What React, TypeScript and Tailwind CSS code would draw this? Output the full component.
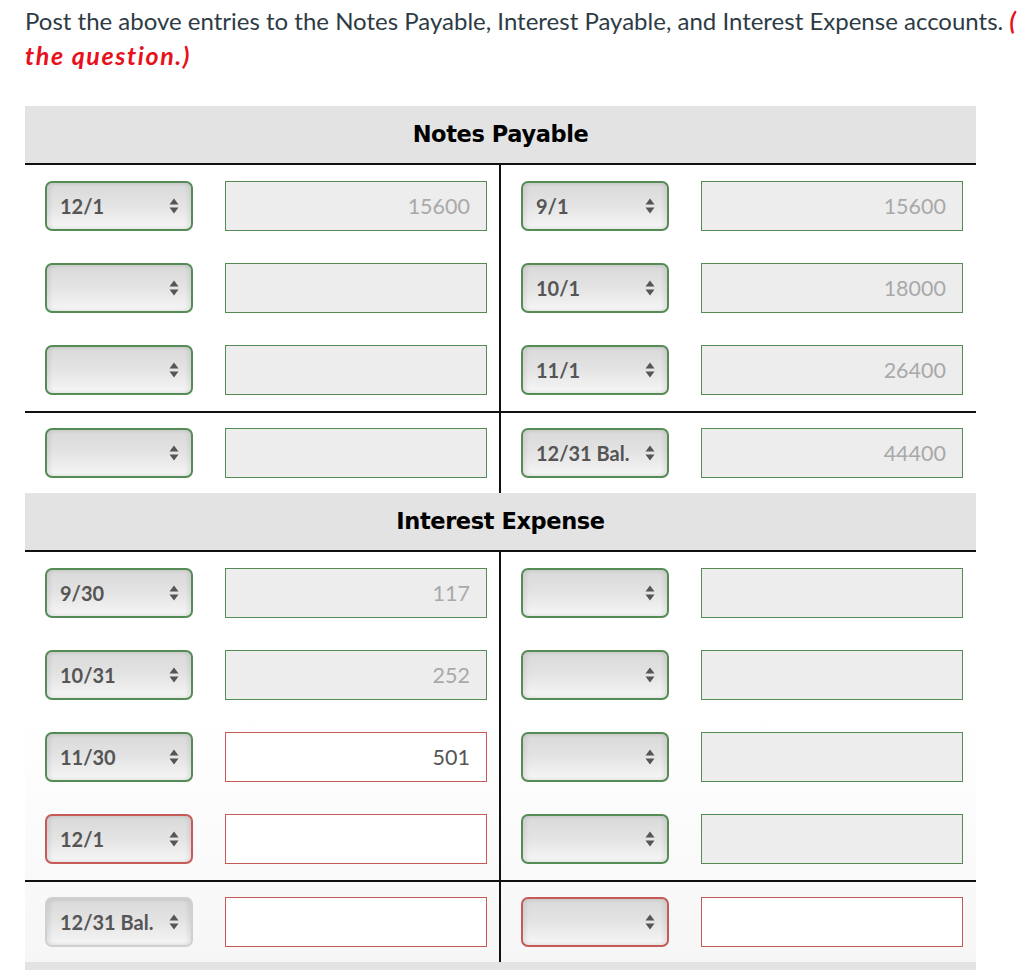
import React from 'react';

type Tone = 'green' | 'red' | 'gray';

type Cell = {
  date?: string;
  dateTone: Tone;
  amount?: string;
  amountTone: Tone;
};

type Row = {
  left: Cell;
  right: Cell;
  balance?: boolean;
};

const g = (date?: string, amount?: string): Cell => ({ date, dateTone: 'green', amount, amountTone: 'green' });

const notesPayable: Row[] = [
  { left: g('12/1', '15600'), right: g('9/1', '15600') },
  { left: g(), right: g('10/1', '18000') },
  { left: g(), right: g('11/1', '26400') },
  { left: g(), right: g('12/31 Bal.', '44400'), balance: true },
];

const interestExpense: Row[] = [
  { left: g('9/30', '117'), right: g() },
  { left: g('10/31', '252'), right: g() },
  { left: { date: '11/30', dateTone: 'green', amount: '501', amountTone: 'red' }, right: g() },
  { left: { date: '12/1', dateTone: 'red', amountTone: 'red' }, right: g() },
  {
    left: { date: '12/31 Bal.', dateTone: 'gray', amountTone: 'red' },
    right: { dateTone: 'red', amountTone: 'red' },
    balance: true,
  },
];

const selectBorder: Record<Tone, string> = {
  green: 'border-[#558c55]',
  red: 'border-[#c55a57]',
  gray: 'border-[#d0d0d0]',
};

function Arrows() {
  return (
    <svg width="10" height="16" viewBox="0 0 10 16" className="shrink-0">
      <path d="M5 0.5 L9.5 6.5 L0.5 6.5 Z" fill="#555" />
      <path d="M0.5 9.5 L9.5 9.5 L5 15.5 Z" fill="#555" />
    </svg>
  );
}

function DateSelect({ value, tone }: { value?: string; tone: Tone }) {
  return (
    <div
      className={`w-[148px] h-[50px] rounded-[7px] border-2 ${selectBorder[tone]} bg-gradient-to-b from-[#d9d9d9] via-[#e4e4e4] to-[#f6f6f6] shadow-[inset_3px_0_4px_rgba(0,0,0,0.07),inset_-3px_0_4px_rgba(0,0,0,0.07)] flex items-center justify-between pl-[13px] pr-[12px]`}
    >
      <span className="text-[20px] font-bold text-[#555] whitespace-nowrap">{value}</span>
      <Arrows />
    </div>
  );
}

function AmountInput({ value, tone }: { value?: string; tone: Tone }) {
  const red = tone === 'red';
  return (
    <div
      className={`w-[262px] h-[50px] border-[1.5px] flex items-center justify-end pr-[16px] ${
        red ? 'border-[#c55a57] bg-white text-[#555]' : 'border-[#558c55] bg-[#ededed] text-[#a9a9a9]'
      }`}
    >
      <span className="text-[21.5px]">{value}</span>
    </div>
  );
}

function Half({ cell, divider }: { cell: Cell; divider?: boolean }) {
  return (
    <div className={`flex items-center gap-[32px] pl-[20px] ${divider ? 'border-r-2 border-[#111]' : ''}`}>
      <DateSelect value={cell.date} tone={cell.dateTone} />
      <AmountInput value={cell.amount} tone={cell.amountTone} />
    </div>
  );
}

function Account({ title, rows }: { title: string; rows: Row[] }) {
  return (
    <div>
      <div className="h-[59px] bg-[#e3e3e3] border-b-2 border-[#111] flex items-center justify-center">
        <h2 className="text-[22.5px] font-bold text-black tracking-[-0.4px] font-['DejaVu_Sans',sans-serif]">{title}</h2>
      </div>
      {rows.map((row, i) => (
        <div
          key={i}
          className={`grid grid-cols-[476px_1fr] h-[82px] ${row.balance ? 'border-t-2 border-[#111]' : ''}`}
        >
          <Half cell={row.left} divider />
          <Half cell={row.right} />
        </div>
      ))}
    </div>
  );
}

export default function App() {
  return (
    <div className="w-[1024px] h-[970px] overflow-hidden bg-white font-['Lato',sans-serif]">
      <div className="pl-[25px] pt-[4px] text-[24px] leading-[34px] text-[#2d3b45]">
        <p className="whitespace-nowrap">
          Post the above entries to the Notes Payable, Interest Payable, and Interest Expense accounts.{' '}
          <span className="text-[#e8101a] font-bold italic">(</span>
        </p>
        <p className="text-[#e8101a] font-bold italic text-[25px] tracking-[1.6px]">the question.)</p>
      </div>

      <div className="ml-[25px] w-[951px] mt-[34px] bg-gradient-to-b from-white from-70% to-[#f6f6f6]">
        <Account title="Notes Payable" rows={notesPayable} />
        <Account title="Interest Expense" rows={interestExpense} />
        <div className="h-[10px] bg-[#e3e3e3]" />
      </div>
    </div>
  );
}
